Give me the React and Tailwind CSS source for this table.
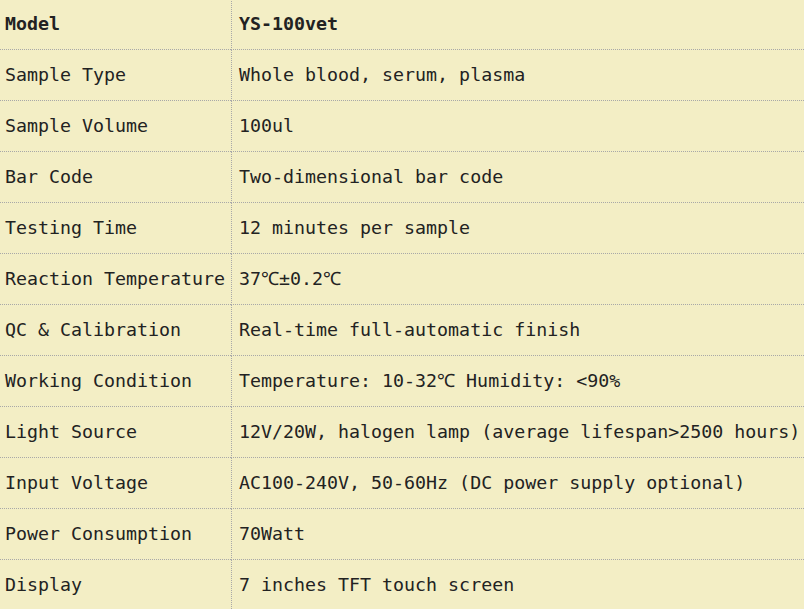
import React from 'react';

const SPECS = [
  ['Model', 'YS-100vet'],
  ['Sample Type', 'Whole blood, serum, plasma'],
  ['Sample Volume', '100ul'],
  ['Bar Code', 'Two-dimensional bar code'],
  ['Testing Time', '12 minutes per sample'],
  ['Reaction Temperature', '37℃±0.2℃'],
  ['QC & Calibration', 'Real-time full-automatic finish'],
  ['Working Condition', 'Temperature: 10-32℃ Humidity: <90%'],
  ['Light Source', '12V/20W, halogen lamp (average lifespan>2500 hours)'],
  ['Input Voltage', 'AC100-240V, 50-60Hz (DC power supply optional)'],
  ['Power Consumption', '70Watt'],
  ['Display', '7 inches TFT touch screen'],
];

export default function App() {
  return (
    <div className="w-[804px] h-[609px] overflow-hidden bg-[#f3eec5]">
      <div
        className="-mt-[1px] grid grid-cols-[231px_1fr] text-[18.3px] text-[#222222]"
        style={{ fontFamily: '"DejaVu Sans Mono", "Liberation Mono", monospace' }}
      >
        {SPECS.map(([label, value], i) => (
          <React.Fragment key={label}>
            <div
              className={`h-[51px] flex items-center pl-[5px] whitespace-nowrap border-b border-dotted border-[#a8a8a8] ${i === 0 ? 'font-bold' : ''}`}
            >
              {label}
            </div>
            <div
              className={`h-[51px] flex items-center pl-[7px] whitespace-nowrap border-b border-l border-dotted border-[#a8a8a8] ${i === 0 ? 'font-bold' : ''}`}
            >
              {value}
            </div>
          </React.Fragment>
        ))}
      </div>
    </div>
  );
}
